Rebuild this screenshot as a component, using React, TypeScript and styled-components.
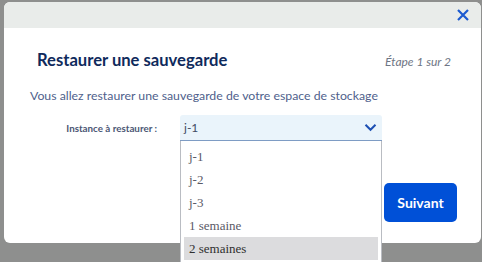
import React, { useState } from "react";
import styled, { createGlobalStyle } from "styled-components";

const GlobalStyle = createGlobalStyle`
  html, body {
    margin: 0;
    padding: 0;
    background: #8e8f8e;
  }
  * {
    box-sizing: border-box;
  }
`;

const options = ["j-1", "j-2", "j-3", "1 semaine", "2 semaines"];

const Page = styled.div`
  height: 262px;
  padding: 2px 1px 0 4px;
  overflow: hidden;
  font-family: "Source Sans Pro", Lato, "Open Sans", sans-serif;
`;

const Modal = styled.div`
  position: relative;
  height: 241px;
  background: #ffffff;
  border-radius: 6px;
`;

const TopBar = styled.div`
  height: 26px;
  background: #e9ecea;
  border-radius: 6px 6px 0 0;
  display: flex;
  justify-content: flex-end;
  align-items: center;
  padding-right: 11px;
`;

const CloseButton = styled.button`
  border: none;
  background: transparent;
  padding: 0;
  width: 14px;
  height: 14px;
  display: flex;
  cursor: pointer;
`;

const Body = styled.div`
  padding: 20px 24px 0 26px;
`;

const TitleRow = styled.div`
  display: flex;
  justify-content: space-between;
  align-items: baseline;
  padding: 0 6px 0 7px;
`;

const Title = styled.h2`
  margin: 0;
  font-size: 16.6px;
  line-height: 24px;
  font-weight: 700;
  color: #0f2a5c;
`;

const Step = styled.span`
  font-size: 12px;
  font-style: italic;
  color: #6e7584;
`;

const Intro = styled.p`
  margin: 15px 0 0;
  font-size: 12.3px;
  line-height: 18px;
  color: #4f5f8c;
`;

const FieldRow = styled.div`
  display: grid;
  grid-template-columns: 127px 202px;
  column-gap: 23px;
  align-items: center;
  margin-top: 10px;
`;

const Label = styled.label`
  justify-self: end;
  font-size: 9.8px;
  font-weight: 700;
  color: #4c5775;
`;

const SelectWrap = styled.div`
  position: relative;
`;

const SelectBox = styled.div`
  height: 26px;
  display: flex;
  align-items: center;
  justify-content: space-between;
  padding: 0 5px 0 4px;
  background: #eaf4fb;
  border-bottom: 1px solid #7e9cc4;
  border-radius: 3px 3px 0 0;
  font-size: 12px;
  color: #3f4a63;
`;

const DropList = styled.ul`
  position: absolute;
  top: 100%;
  left: 0;
  width: 202px;
  margin: 0;
  padding: 4px 3px 8px;
  list-style: none;
  background: #ffffff;
  border: 1px solid #b9bcc2;
  border-top: none;
  font-family: "Liberation Serif", serif;
  font-size: 13px;
  z-index: 2;
`;

const Option = styled.li<{ $active: boolean }>`
  height: 23px;
  line-height: 23px;
  padding-left: 5px;
  color: ${(p) => (p.$active ? "#2f2f2f" : "#5a5a66")};
  background: ${(p) => (p.$active ? "#dcdcde" : "transparent")};
`;

const Footer = styled.div`
  display: flex;
  justify-content: flex-end;
  margin-top: 42px;
`;

const NextButton = styled.button`
  width: 73px;
  height: 39px;
  border: none;
  border-radius: 5px;
  background: #0050d7;
  color: #ffffff;
  font-family: inherit;
  font-size: 14px;
  font-weight: 700;
  cursor: pointer;
`;

const Chevron = () => (
  <svg width="13" height="9" viewBox="0 0 13 9" fill="none">
    <path d="M1.5 1.8 6.5 6.8 11.5 1.8" stroke="#1c4fb3" strokeWidth="2" />
  </svg>
);

const CloseIcon = () => (
  <svg width="14" height="14" viewBox="0 0 14 14" fill="none">
    <path d="M2 2 12 12M12 2 2 12" stroke="#1c5ad0" strokeWidth="2.2" />
  </svg>
);

export default function App() {
  const [value] = useState("j-1");
  const [hover] = useState("2 semaines");

  return (
    <>
      <GlobalStyle />
      <Page>
        <Modal>
          <TopBar>
            <CloseButton aria-label="Fermer">
              <CloseIcon />
            </CloseButton>
          </TopBar>
          <Body>
            <TitleRow>
              <Title>Restaurer une sauvegarde</Title>
              <Step>Étape 1 sur 2</Step>
            </TitleRow>
            <Intro>Vous allez restaurer une sauvegarde de votre espace de stockage</Intro>
            <FieldRow>
              <Label>Instance à restaurer :</Label>
              <SelectWrap>
                <SelectBox>
                  <span>{value}</span>
                  <Chevron />
                </SelectBox>
                <DropList>
                  {options.map((o) => (
                    <Option key={o} $active={o === hover}>
                      {o}
                    </Option>
                  ))}
                </DropList>
              </SelectWrap>
            </FieldRow>
            <Footer>
              <NextButton>Suivant</NextButton>
            </Footer>
          </Body>
        </Modal>
      </Page>
    </>
  );
}
